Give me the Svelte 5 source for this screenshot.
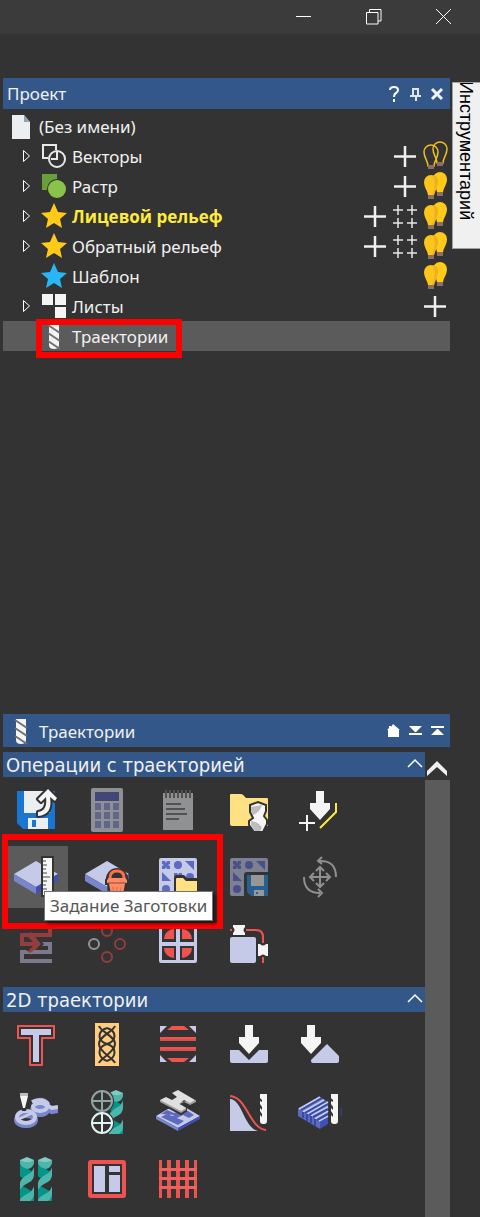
<script>
  const LAV = '#c5cae9';
  const IND = '#5c6bc0';
  const RED = '#ef5350';
  const BG = '#333333';

  const slab = `<path d="M0 19 22 6 44 19 22 32Z" fill="${LAV}"/><path d="M0 19 22 32V39L0 26Z" fill="#7986cb"/><path d="M22 32 44 19V26L22 39Z" fill="#3f51b5"/>`;

  const floppy = (blue, white) =>
    `<path d="M20 20H41V41H24L20 37Z" fill="${blue}"/><path d="M24 20H37V31H24ZM27 35H37V41H27Z" fill="${white}"/><path d="M29 37h2v2h-2z" fill="${blue}"/>`;

  const cross = (x, y) => `M${x - 4} ${y - 4}h3l1 2 1-2h3v3l-2 1 2 1v3h-3l-1-2-1 2h-3v-3l2-1-2-1z`;
  const dot = (x, y) => `M${x - 4} ${y}a4 4 0 1 0 8 0a4 4 0 1 0-8 0z`;
  const pattern = (base, ink) =>
    `<rect x="3" y="3" width="38" height="38" rx="2" fill="${base}"/><path fill="${ink}" d="${cross(10, 10)}${dot(22, 10)}M29 6h9v9zM6 17v9h9z${cross(22, 22)}${dot(34, 22)}${dot(10, 34)}"/>`;

  const twistBand = 'M0 26Q1 21 7 18Q13 15 14 10V18Q14 23 8 26Q2 29 0 33Z';
  const twistShade = 'M0 8Q7 11 13 15L6 20Q1 22 0 19Z';
  const twist = (x) =>
    `<g transform="translate(${x} 0)"><g fill="#009688"><path d="${twistShade}"/><path d="${twistShade}" transform="translate(0 20)"/><path d="M6 34Q14 33 14 38V44H0V40Z"/></g><g fill="#4db6ac"><path d="M0 3H14V6Q13 11 8 12Q2 11 0 7Z"/><path d="${twistBand}"/><path d="M0 43Q1 40 7 37Q13 34 14 29V37Q14 41 10 44H0Z"/></g><path d="M0 3 7 0 14 3 10 5H4Z" fill="#80cbc4"/></g>`;

  const cutter = `<path d="M33 4H40V31Q40 34 37 34H36Q33 34 33 31V25L35 27V24L33 21V18L35 20V17L33 14V11L35 12V10L33 8Z" fill="#f5f5f5"/>`;

  const bit = `<path d="M11 3H21V24Q21 28 16 28T11 24Z" fill="#f5f5f5"/><path d="M10 4 22 12M10 12 22 20M10 20 22 28" stroke="#707070" stroke-width="2" fill="none"/>`;

  const starShape = 'M16 2 20 11 29 12 22 18 24 27 16 22 8 27 10 18 3 12 12 11Z';

  const bulbShape = (x, y, r) =>
    `M${x - 3} ${y + 14}C${x - 3} ${y + 9} ${x - r} ${y + 6} ${x - r} ${y}A${r} ${r} 0 0 1 ${x + r} ${y}C${x + r} ${y + 6} ${x + 3} ${y + 9} ${x + 3} ${y + 14}Z`;

  const art = {
    file: `<path d="M7 4H19L25 11V28H7Z" fill="#eceff1"/><path d="M19 4 25 11H19Z" fill="#90a4ae"/>`,
    vectors: `<path d="M10 17H5V4H18V9" fill="none" stroke="#e8e8e8" stroke-width="2"/><circle cx="19" cy="18" r="8" fill="none" stroke="#e8e8e8" stroke-width="2"/><path d="M19 11V18H13" fill="none" stroke="#e8e8e8" stroke-width="2"/>`,
    raster: `<path d="M4 3H19V9L9 19H4Z" fill="#689f38"/><circle cx="19" cy="18" r="10" fill="${BG}"/><circle cx="19" cy="18" r="9" fill="#8bc34a"/>`,
    star: `<path d="${starShape}" fill="#ffca18"/>`,
    blueStar: `<path d="${starShape}" fill="#29b6f6"/>`,
    sheets: `<path d="M4 3H15V14H4ZM17 3H28V14H17ZM17 16H28V27H17Z" fill="#f5f5f5"/>`,
    bit,
    plus: `<path d="M15 5V26M4 15.5H26" stroke="#f0f0f0" stroke-width="2.5"/>`,
    grid: `<path d="M8 4V14M3 9H13M22 4V14M17 9H27M8 17V27M3 22H13M22 17V27M17 22H27" stroke="#e8e8e8" stroke-width="1.5"/>`,
    bulbs: `<path d="${bulbShape(20, 8, 7)}" fill="#ffca18"/><path d="M17 21h6v4h-6z" fill="#8d6e63"/><path d="${bulbShape(11, 11, 7)}" fill="#fdc41c"/><path d="M13 4Q19 6 18 12L14 24H12Q17 14 13 4Z" fill="#eeb020"/><path d="M8 24h6v4H8z" fill="#8d6e63"/>`,
    bulbsOff: `<path d="${bulbShape(20, 8, 7)}${bulbShape(11, 11, 7)}" fill="none" stroke="#eebf1c" stroke-width="1.5"/><path d="M17 21h6v4h-6zM8 24h6v4H8z" fill="#8d6e63"/>`,

    export: `<path d="M3 3H41V41H9L3 35Z" fill="#1976d2"/><path d="M10 3H36V25H10ZM14 30H34V41H14Z" fill="#eceff1"/><path d="M18 32h4v7h-4z" fill="#1976d2"/><path d="M24 24C31 23 33 18 32 9L27 14 24 11 34 1 43 10 41 13 36 9C38 21 34 27 24 28Z" fill="#f5f5f5" stroke="${BG}" stroke-width="4" stroke-linejoin="round"/><path d="M24 24C31 23 33 18 32 9L27 14 24 11 34 1 43 10 41 13 36 9C38 21 34 27 24 28Z" fill="#f5f5f5"/>`,
    calculator: `<rect x="6" y="0" width="32" height="44" rx="2" fill="#8f9094"/><path d="M10 4h24v9H10z" fill="#42477a"/><path d="M10 15h6v7h-6zM19 15h6v7h-6zM28 15h6v7h-6zM10 24h6v7h-6zM19 24h6v7h-6zM28 24h6v7h-6zM10 33h6v7h-6zM19 33h6v7h-6zM28 33h6v7h-6z" fill="#60658a"/>`,
    notes: `<path d="M7 5H37V42H7Z" fill="#8f9192"/><path d="M9 2h2v8H9zM13 2h2v8h-2zM17 2h2v8h-2zM21 2h2v8h-2zM25 2h2v8h-2zM29 2h2v8h-2zM33 2h2v8h-2z" fill="#525252"/><path d="M10 15h15v2H10zM10 20h19v2H10zM10 25h21v2H10zM10 30h13v2H10z" fill="#525252"/>`,
    library: `<path d="M3 7Q3 6 4 6H14Q16 6 18 9L19 10H40Q41 10 41 11V38H5Q3 38 3 36Z" fill="#ffe082"/><path d="M23 17 31 14 39 17V23L37 28 40 32V36L36 44H27L22 37V33L26 30 23 24Z" fill="#f5f5f5" stroke="${BG}" stroke-width="2"/><path d="M24 19 35 17Q33 24 26 27L24 23ZM24 33Q32 34 35 40L33 43H28L24 37Z" fill="#bdbdbd"/>`,
    addRamp: `<path d="M12 15H18V3H26V15H32V21L22 32 12 21Z" fill="#f5f5f5"/><path d="M9 27V43M1 35H17" stroke="#f5f5f5" stroke-width="2"/><path d="M38 15V24L22 40" fill="none" stroke="#ffeb3b" stroke-width="2"/>`,
    stock: `${slab}<path d="M27 1H40V42H27Z" fill="${BG}"/><path d="M29 3H38V40H29Z" fill="#f5f5f5"/><path d="M29 5h3v2h-3zM29 9h4v2h-4zM29 13h3v2h-3zM29 17h4v2h-4zM29 21h7v2h-7zM29 25h4v2h-4zM29 29h3v2h-3zM29 33h4v2h-4z" fill="#9e9e9e"/>`,
    material: `${slab}<circle cx="32" cy="24" r="11" fill="${BG}"/><path d="M21 25 23 22H41L43 25V29H41L38 44H26L23 29H21Z" fill="#ff8a65" stroke="${BG}" stroke-width="2"/><path d="M25 23Q25 16 32 16T39 23" fill="none" stroke="#ff7043" stroke-width="3"/><path d="M23 28H41" stroke="#8a4a3a" stroke-width="1"/><path d="M28 32 29 43M32 32V43M36 32 35 43" stroke="#e26a48" stroke-width="1"/>`,
    loadTemplate: `${pattern(LAV, IND)}<path d="M18 44V23Q18 20 21 20H28L31 23H44V44Z" fill="${BG}"/><path d="M20 24Q20 23 21 23H27L30 26H41V41H20Z" fill="#ffe082"/>`,
    saveTemplate: `${pattern('#7d7f92', '#4a5086')}<path d="M17 41V20Q17 17 20 17H41V41Z" fill="${BG}"/>${floppy('#28608f', '#959799')}`,
    transform: `<g fill="none" stroke="#8f8f8f" stroke-width="2"><path d="M22 13V31M13 22H31"/><path d="M18 16 22 12 26 16M18 28 22 32 26 28M16 18 12 22 16 26M28 18 32 22 28 26"/><path d="M21 6Q38 5 38 22M24 2 20 6 24 9M6 22Q6 38 22 38M20 34 24 38 20 42"/></g>`,
    merge: `<path d="M38 3V15H10V20H19L13 14 17 10 27 22 17 33 13 30 19 24H6V11H34V3Z" fill="#933e3e"/><path d="M28 20H38V32H10V37H38V41H6V28H12L16 31 20 28H34V24H28L30 22Z" fill="#7d788c"/>`,
    drillCircle: `<g fill="none" stroke-width="2"><circle cx="22" cy="9" r="5" stroke="#933e3e"/><circle cx="35" cy="22" r="5" stroke="#933e3e"/><circle cx="22" cy="35" r="5" stroke="#933e3e"/><circle cx="9" cy="22" r="5" stroke="#949694"/></g>`,
    tiles: `<path fill-rule="evenodd" d="M5 3H39Q41 3 41 5V39Q41 41 39 41H5Q3 41 3 39V5Q3 3 5 3ZM6 6V20H20V6ZM24 6V20H38V6ZM6 24V38H20V24ZM24 24V38H38V24Z" fill="${LAV}"/><path d="M18 17H8A10 10 0 0 1 18 7ZM26 17V7A10 10 0 0 1 36 17ZM18 26V36A10 10 0 0 1 8 26ZM26 26H36A10 10 0 0 1 26 36Z" fill="${RED}"/>`,
    clamps: `<rect x="3" y="15" width="26" height="26" rx="2" fill="${LAV}"/><path d="M3 8H5M19 8H29Q36 8 36 15V21M36 35V41" fill="none" stroke="${RED}" stroke-width="2"/><path d="M6 3H18V5Q15 8 18 11V13H6V11Q9 8 6 5ZM31 22H33Q36 25 39 22H41V34H39Q36 31 33 34H31Z" fill="#f5f5f5"/>`,

    profile: `<path d="M4 3H40V15H28V42H16V15H4Z" fill="none" stroke="${RED}" stroke-width="2" stroke-linejoin="round"/><path d="M7 6H37V12H25V39H19V12H7Z" fill="${LAV}"/>`,
    knot: `<path d="M10 0H34V43H10Z" fill="#ffcc80"/><g fill="none" stroke="${BG}" stroke-width="2"><path d="M14 3C16 9 30 13 30 21S16 35 14 40M30 3C28 9 14 13 14 21S28 35 30 40"/><path d="M22 5C12 8 12 18 22 21S32 34 22 38M22 5C32 8 32 18 22 21S12 34 22 38"/></g>`,
    facing: `<path d="M16 3H28L33 7H11ZM4 14H40V18H4ZM4 24H40V28H4ZM11 35H33L28 39H16Z" fill="${RED}"/><path d="M4 17H40M4 27H40" stroke="#c94a48" stroke-width="1"/><path d="M4 3H11L4 10ZM40 3V10L33 3ZM4 39V32L11 39ZM40 39H33L40 32Z" fill="#d1c4e9"/>`,
    vgroove: `<path d="M12 14H18V2H26V14H32V20L22 31 12 20Z" fill="#f5f5f5"/><path d="M3 27H12L22 37 32 27H41V38Q41 40 39 40H5Q3 40 3 38Z" fill="${LAV}"/>`,
    chamfer: `<path d="M3 14H9V2H17V14H23V20L13 31 3 20Z" fill="#f5f5f5"/><path d="M29 21 41 33V38Q41 40 39 40H15Q13 40 13 38V37Z" fill="${LAV}"/>`,
    engrave: `<g fill="none"><g stroke="#7986cb" stroke-width="6"><ellipse cx="12" cy="30" rx="9" ry="5"/><ellipse cx="26" cy="20" rx="7" ry="4"/><path d="M19 13Q28 8 33 14L33 18 38 21 44 20"/></g><g stroke="${LAV}" stroke-width="4"><ellipse cx="12" cy="27" rx="9" ry="6"/><ellipse cx="26" cy="17" rx="7" ry="4"/><path d="M18 12Q27 8 33 13L34 16 38 18 44 17"/></g><path d="M5 29 18 23" stroke="${LAV}" stroke-width="3"/></g><path d="M4 2H16V8L12 21H8L4 8Z" fill="${BG}"/><path d="M6 6H14L11 18H9Z" fill="#f5f5f5"/><path d="M6 3H14V6H6Z" fill="#bdbdbd"/>`,
    drilling: `${twist(24)}<circle cx="17" cy="11" r="12" fill="${BG}"/><circle cx="17" cy="33" r="12" fill="${BG}"/><g fill="none" stroke-width="2"><path d="M6 11H28M17 0V22" stroke="#90a4a0"/><circle cx="17" cy="11" r="10" stroke="#90a4a0"/><path d="M6 33H28M17 22V44" stroke="#e0f2f1"/><circle cx="17" cy="33" r="10" stroke="#e0f2f1"/></g>`,
    inlay: `<path d="M0 26 22 13 44 26 22 38Z" fill="${LAV}"/><path d="M0 26 22 38V41L0 29Z" fill="#7986cb"/><path d="M22 38 44 26V29L22 41Z" fill="#3f51b5"/><path d="M5 24 11 20 18 23 24 21 32 21 38 25 33 28 27 25 21 28 28 31 22 35 5 27 11 24 16 26 19 25Z" fill="${IND}"/><path d="M4 10 10 7 16 10 21 7 16 3 22 0 40 10V13L34 16 28 13 24 15 30 19V21L25 24 4 13Z" fill="${BG}" stroke="${BG}" stroke-width="2"/><path d="M4 10 16 13 40 10V12L34 15 28 12 24 14 30 18V20L25 23 4 12Z" fill="#9e9e9e"/><path d="M4 10 10 7 16 10 21 7 16 3 22 0 39 10 34 13 28 10 23 14 30 18 25 21Z" fill="#e0e0e0"/>`,
    fluting: `<path d="M3 9C15 9 17 38 31 41H3Z" fill="${LAV}"/><path d="M3 6C20 7 22 38 39 40" fill="none" stroke="${RED}" stroke-width="2"/>${cutter}`,
    texture: `<path d="M0 19 22 7 30 12V26L22 31Z" fill="#7986cb"/><path d="M0 19 22 31V39L0 26Z" fill="#5c6bc0"/><path d="M22 31 30 26V34L22 39Z" fill="#3f51b5"/><path d="M1 19 22 7M5 22 26 10M9 24 30 12M13 26 30 17M17 29 30 21M21 31 30 26" stroke="${LAV}" stroke-width="2"/><path d="M3 20 24 8M7 23 28 11M11 25 30 14M15 27 30 19M19 30 30 24" stroke="#3949ab" stroke-width="2"/><path d="M5 22V28M9 24V31M13 26V33M17 29V36" stroke="#3949ab" stroke-width="2"/><path d="M43 18V26" stroke="#3949ab" stroke-width="1"/>${cutter}`,
    thread: `${twist(6)}${twist(24)}`,
    panel: `<rect x="5" y="5" width="34" height="34" rx="1" fill="none" stroke="${RED}" stroke-width="4"/><path d="M9 9H20V35H9ZM24 9H35V15H24ZM24 18H35V35H24Z" fill="${LAV}"/>`,
    mesh: `<path d="M3 3h3v38H3zM11 3h4v38h-4zM20 3h4v38h-4zM29 3h4v38h-4zM38 3h3v38h-3z" fill="${RED}"/><path d="M3 11h38v3H3zM3 20h38v3H3zM3 29h38v3H3z" fill="#f0625f"/>`
  };

  const nodes = [
    { name: 'Векторы', icon: 'vectors', open: true, actions: ['plus', 'bulbsOff'] },
    { name: 'Растр', icon: 'raster', open: true, actions: ['plus', 'bulbs'] },
    { name: 'Лицевой рельеф', icon: 'star', open: true, active: true, actions: ['plus', 'grid', 'bulbs'] },
    { name: 'Обратный рельеф', icon: 'star', open: true, actions: ['plus', 'grid', 'bulbs'] },
    { name: 'Шаблон', icon: 'blueStar', actions: ['bulbs'] },
    { name: 'Листы', icon: 'sheets', open: true, actions: ['plus'] },
    { name: 'Траектории', icon: 'bit', selected: true, actions: [] }
  ];

  const actionNames = { plus: 'Добавить', grid: 'Сетка', bulbs: 'Скрыть', bulbsOff: 'Показать' };

  const sections = [
    {
      title: 'Операции с траекторией',
      marked: true,
      tools: [
        ['export', 'Сохранить траекторию'], ['calculator', 'Расчёт'], ['notes', 'Сводка'],
        ['library', 'База инструментов'], ['addRamp', 'Врезание'],
        ['stock', 'Задание Заготовки'], ['material', 'Удалить заготовку'], ['loadTemplate', 'Загрузить шаблон'],
        ['saveTemplate', 'Сохранить шаблон'], ['transform', 'Трансформация'],
        ['merge', 'Объединить'], ['drillCircle', 'Массив'], ['tiles', 'Панели'], ['clamps', 'Прижимы']
      ]
    },
    {
      title: '2D траектории',
      tools: [
        ['profile', 'Профиль'], ['knot', 'Узор'], ['facing', 'Выборка'], ['vgroove', 'V-гравировка'],
        ['chamfer', 'Фаска'], ['engrave', 'Гравировка'], ['drilling', 'Сверление'], ['inlay', 'Инкрустация'],
        ['fluting', 'Канавка'], ['texture', 'Текстура'], ['thread', 'Резьба'], ['panel', 'Филёнка'], ['mesh', 'Сетка']
      ]
    }
  ];
  const off = ['calculator', 'notes', 'saveTemplate', 'transform', 'merge', 'drillCircle'];
</script>

<div class="app">
  <header class="titlebar">
    <button aria-label="Свернуть"><svg width="16" height="16"><path d="M0 7.5H15" stroke="#fff" /></svg></button>
    <button aria-label="Восстановить"><svg width="16" height="16"><path d="M.5 3.5H12V15H.5ZM3.5 3.5V.5H15V12H12" fill="none" stroke="#fff" /></svg></button>
    <button aria-label="Закрыть"><svg width="16" height="16"><path d="M0 0 15 15M15 0 0 15" stroke="#fff" /></svg></button>
  </header>

  <div class="body">
    <div class="docked">
      <section class="project">
        <div class="bar">
          <h1>Проект</h1>
          <div class="bar-tools">
            <button aria-label="Справка"><svg width="22" height="22"><path d="M8 7Q8 4 12 4T16 7Q16 9 14 10T12 14M12 16V19" fill="none" stroke="#fff" stroke-width="2" /></svg></button>
            <button aria-label="Закрепить"><svg width="22" height="22"><path d="M9 6V13M14 6V13M8 6H15M6 13H17M12 13V18" fill="none" stroke="#dfe6f2" stroke-width="2" /></svg></button>
            <button aria-label="Закрыть панель"><svg width="22" height="22"><path d="M6 6 16 16M16 6 6 16" stroke="#f0f3f8" stroke-width="3" /></svg></button>
          </div>
        </div>
        <ul class="tree">
          <li class="row root">
            <svg class="pic" viewBox="0 0 32 30">{@html art.file}</svg>
            <span class="name">(Без имени)</span>
          </li>
          {#each nodes as n}
            <li class="row" class:selected={n.selected}>
              {#if n.open}
                <button class="toggle" aria-label={`Развернуть: ${n.name}`}>
                  <svg width="8" height="14"><path d="M1.5 1.5V12.5L7.5 7Z" fill="none" stroke="#fff" /></svg>
                </button>
              {:else}
                <span class="toggle"></span>
              {/if}
              <span class="label" class:framed={n.selected}>
                <svg class="pic" viewBox="0 0 32 30">{@html art[n.icon]}</svg>
                <span class="name" class:active={n.active}>{n.name}</span>
              </span>
              <span class="actions">
                {#each n.actions as a}
                  <button aria-label={`${actionNames[a]}: ${n.name}`}><svg viewBox="0 0 30 30">{@html art[a]}</svg></button>
                {/each}
              </span>
            </li>
          {/each}
        </ul>
      </section>

      <section class="paths">
        <div class="bar tall">
          <svg class="pic" viewBox="0 0 32 30">{@html bit}</svg>
          <h2>Траектории</h2>
          <div class="bar-tools">
            <button aria-label="Домой"><svg width="22" height="22"><path d="M5 10 7 8V6H9V7L11 4 18 10H17V17H6V10Z" fill="#fff" /></svg></button>
            <button aria-label="Развернуть всё"><svg width="22" height="22"><path d="M5 6H18L12 12H11ZM5 13H18V15H5Z" fill="#fff" /></svg></button>
            <button aria-label="Свернуть всё"><svg width="22" height="22"><path d="M5 6H18V8H5ZM5 15H18L12 9H11Z" fill="#fff" /></svg></button>
          </div>
        </div>
        <div class="scroller">
          <div class="sections">
            {#each sections as s}
              <div class="section">
                <div class="section-head">
                  <h3>{s.title}</h3>
                  <button aria-label={`Свернуть: ${s.title}`}><svg width="16" height="10"><path d="M1 9 8 2 15 9" fill="none" stroke="#fff" stroke-width="1.5" /></svg></button>
                </div>
                <div class="tools">
                  {#each s.tools as [icon, label]}
                    <button class="tool" class:hover={icon === 'stock'} disabled={off.includes(icon)} aria-label={label}>
                      <svg viewBox="0 0 44 44">{@html art[icon]}</svg>
                    </button>
                  {/each}
                  {#if s.marked}
                    <div class="frame"></div>
                    <div class="tooltip" role="tooltip">Задание Заготовки</div>
                  {/if}
                </div>
              </div>
            {/each}
          </div>
          <div class="scrollbar">
            <button aria-label="Прокрутить вверх"><svg width="25" height="28"><path d="M2 19 12 9 22 19V24L12 15 2 24Z" fill="#f0f0f0" /></svg></button>
            <div class="thumb"></div>
          </div>
        </div>
      </section>
    </div>

    <aside>
      <button class="tab">Инструментарий</button>
    </aside>
  </div>
</div>

<style>
  :global(body) {
    background: #333333;
  }
  .app {
    min-height: 100vh;
    display: flex;
    flex-direction: column;
    color: #f0f0f0;
    font: 17px/30px "Noto Sans", "Open Sans", sans-serif;
  }
  button {
    margin: 0;
    padding: 0;
    border: 0;
    background: none;
    color: inherit;
    font: inherit;
  }
  svg {
    display: block;
  }
  h1,
  h2,
  h3 {
    margin: 0;
    font-weight: 400;
  }
  .titlebar {
    height: 34px;
    display: flex;
    justify-content: flex-end;
    padding-right: 1px;
    background: #3b3b3b;
  }
  .titlebar button {
    width: 70px;
    display: flex;
    align-items: center;
    justify-content: center;
  }
  .body {
    flex: 1;
    display: flex;
    gap: 2px;
    padding: 44px 0 0 3px;
  }
  .docked {
    flex: 1;
    display: flex;
    flex-direction: column;
  }
  .project {
    flex: 1;
  }
  .bar {
    height: 31px;
    display: flex;
    align-items: center;
    padding: 0 2px 0 4px;
    background: #335788;
  }
  .bar.tall {
    height: 33px;
    padding-left: 2px;
  }
  .bar h1,
  .bar h2 {
    flex: 1;
    font-size: 17px;
    line-height: 30px;
  }
  .bar.tall h2 {
    padding: 2px 0 0 2px;
  }
  .bar-tools {
    display: flex;
  }
  .tree {
    list-style: none;
    margin: 0;
    padding: 2px 0;
  }
  .row {
    height: 30px;
    display: flex;
    align-items: center;
    padding-left: 11px;
  }
  .row.root {
    padding-left: 2px;
    gap: 2px;
  }
  .row.selected {
    background: #5b5b5b;
  }
  .toggle {
    width: 24px;
    display: flex;
    justify-content: center;
  }
  .pic {
    width: 32px;
    height: 30px;
  }
  .label {
    position: relative;
    display: flex;
    gap: 2px;
  }
  .label.framed::after {
    content: "";
    position: absolute;
    inset: -2px -14px -7px -2px;
    border: 6px solid #ff0000;
  }
  .name {
    line-height: 32px;
    height: 30px;
    white-space: nowrap;
  }
  .name.active {
    color: #ffeb3b;
    font-family: "Open Sans", "Noto Sans", sans-serif;
    font-weight: 700;
  }
  .actions {
    display: flex;
    margin-left: auto;
  }
  .actions svg {
    width: 30px;
    height: 30px;
  }
  .scroller {
    display: flex;
    padding-top: 5px;
  }
  .sections {
    flex: 1;
  }
  .section-head {
    height: 25px;
    display: flex;
    justify-content: space-between;
    align-items: center;
    padding: 0 2px 0 3px;
    background: #335788;
  }
  .section-head button {
    padding-bottom: 4px;
  }
  h3 {
    font-family: "DejaVu Sans Condensed", "Noto Sans", sans-serif;
    font-size: 20px;
    line-height: 26px;
  }
  .tools {
    position: relative;
    display: grid;
    grid-template-columns: repeat(5, 63px);
    gap: 5px 8px;
    padding: 2px 2px 12px;
  }
  .section:last-child .tools {
    padding-bottom: 7px;
  }
  .tool {
    height: 62px;
    padding: 9px 10px 9px 9px;
  }
  .tool svg {
    width: 44px;
    height: 44px;
  }
  .tool.hover {
    background: #5b5b5b;
  }
  .frame {
    position: absolute;
    left: -1px;
    top: 57px;
    width: 209px;
    height: 83px;
    border: 6px solid #ff0000;
  }
  .tooltip {
    position: absolute;
    left: 41px;
    top: 114px;
    padding: 0 5px;
    border: 1px solid #767676;
    background: #ffffff;
    box-shadow: 3px 3px 3px rgba(0, 0, 0, 0.5);
    color: #575757;
    line-height: 28px;
    white-space: nowrap;
  }
  .scrollbar {
    width: 25px;
    display: flex;
    flex-direction: column;
  }
  .thumb {
    flex: 1;
    background: #5b5b5b;
  }
  aside {
    width: 28px;
    padding-top: 4px;
  }
  .tab {
    width: 28px;
    height: 167px;
    overflow: hidden;
    border: 1px solid #a0a0a0;
    border-width: 1px 0 1px 1px;
    background: #f0f0f0;
    color: #000000;
    font: 18px/28px "Liberation Sans", Arial, sans-serif;
    writing-mode: vertical-rl;
    text-align: left;
    text-indent: -2px;
  }
</style>
